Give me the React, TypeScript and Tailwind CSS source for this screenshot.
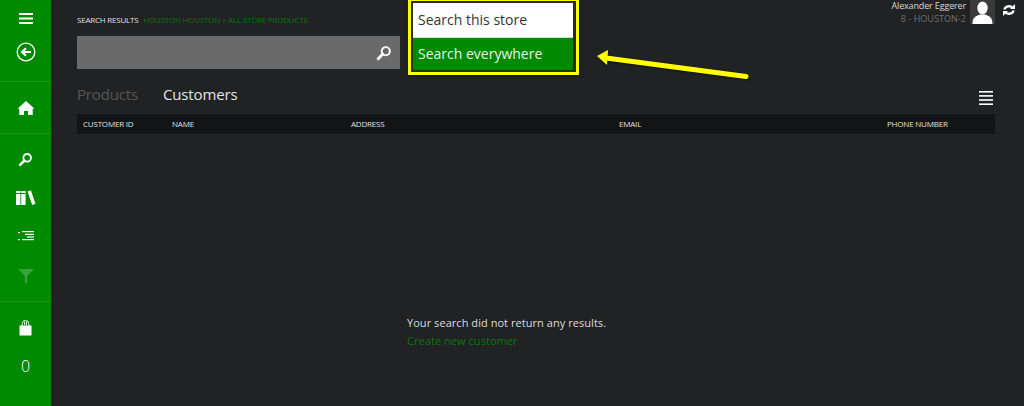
const font = { fontFamily: '"Open Sans", "Noto Sans", sans-serif' };

function Search({ size = 18 }: { size?: number }) {
  return (
    <svg width={size} height={size} viewBox="0 0 18 18" fill="none" stroke="white">
      <circle cx="11" cy="7" r="4.6" strokeWidth="2.2" />
      <path d="M7.5 10.5 L2.5 15.5" strokeWidth="3.2" strokeLinecap="round" />
    </svg>
  );
}

function Rail({ className, children }: { className: string; children: React.ReactNode }) {
  return <div className={`flex items-center justify-center ${className}`}>{children}</div>;
}

function Sidebar() {
  return (
    <div className="flex h-[406px] w-[51px] shrink-0 flex-col bg-[#008a00] text-white">
      <Rail className="h-[35px] pt-px">
        <svg width="14" height="11" viewBox="0 0 14 11" fill="white">
          <rect y="0" width="14" height="2" />
          <rect y="4.5" width="14" height="2" />
          <rect y="9" width="14" height="2" />
        </svg>
      </Rail>
      <Rail className="h-[47px] border-b border-[#1b961b] pb-[13px]">
        <svg width="20" height="20" viewBox="0 0 20 20" fill="none" stroke="white">
          <circle cx="10" cy="10" r="8.8" strokeWidth="1.3" />
          <path d="M15 10 H7 M10 6.2 L6 10 L10 13.8" strokeWidth="2.2" />
        </svg>
      </Rail>
      <Rail className="h-[52px] border-b border-[#1b961b]">
        <svg width="16" height="16" viewBox="0 0 16 16" fill="white">
          <path d="M8 1 L16 8.2 L14.7 9.3 L14.7 15 L10 15 L10 11 L6 11 L6 15 L1.3 15 L1.3 9.3 L0 8.2 Z" />
        </svg>
      </Rail>
      <Rail className="h-[49px] pt-[2px]">
        <Search size={15} />
      </Rail>
      <Rail className="h-[30px]">
        <svg width="20" height="16" viewBox="0 0 20 16" fill="white">
          <rect x="0" y="1" width="4.4" height="14" />
          <rect x="5.2" y="1" width="4.4" height="14" />
          <path d="M11.5 1.5 L14.8 0.3 L19.5 13.8 L16.2 15 Z" />
          <rect x="0" y="3" width="9.6" height="1" fill="#008a00" />
        </svg>
      </Rail>
      <Rail className="h-[46px]">
        <svg width="16" height="10" viewBox="0 0 16 10" fill="white">
          <rect x="0" y="1" width="2" height="1.2" />
          <rect x="0" y="8" width="2" height="1.2" />
          <rect x="4" y="0" width="12" height="1.2" />
          <rect x="7" y="2.8" width="9" height="1.2" />
          <rect x="9" y="5.4" width="7" height="1.2" />
          <rect x="4" y="8" width="12" height="1.2" />
        </svg>
      </Rail>
      <Rail className="h-[33px]">
        <svg width="16" height="14" viewBox="0 0 16 14" fill="#3aa23a">
          <path d="M0 0 H16 L9.2 7 V14 H6.8 V7 Z" />
        </svg>
      </Rail>
      <div className="h-[10px] border-b border-[#1b961b]" />
      <Rail className="h-[50px] pt-[1px]">
        <svg width="13" height="16" viewBox="0 0 13 16" fill="white">
          <path d="M0.5 5.5 H12.5 V15.5 H0.5 Z" />
          <path d="M3.2 6 V3.5 a3.3 3 0 0 1 6.6 0 V6 M5.5 5 V1.5 M7.5 5 V1.5" fill="none" stroke="white" strokeWidth="0.9" />
        </svg>
      </Rail>
      <Rail className="h-[28px] text-[16px] font-light">0</Rail>
    </div>
  );
}

const columns: [string, string][] = [
  ["CUSTOMER ID", "w-[89px]"],
  ["NAME", "w-[179px]"],
  ["ADDRESS", "w-[268px]"],
  ["EMAIL", "w-[268px]"],
  ["PHONE NUMBER", ""],
];

function Main() {
  return (
    <div className="relative flex h-[406px] flex-1 flex-col bg-[#212223] pl-[26px] pr-[29px]">
      <div className="absolute right-[58px] top-0 text-right text-[9px] leading-[12px]">
        <div className="tracking-[-0.15px] text-[#d8d8d8]">Alexander Eggerer</div>
        <div className="mt-[1px] tracking-[0.05px] text-[#6f6f6f]">8 - HOUSTON-2</div>
      </div>
      <div className="absolute right-[29px] top-0 flex h-[24px] w-[25px] items-end justify-center bg-[#3a3a3a]">
        <svg width="21" height="23" viewBox="0 0 21 23" fill="white">
          <ellipse cx="10.5" cy="7" rx="5.2" ry="6.5" />
          <path d="M0.5 23 C0.5 16 4 15 8 13.5 H13 C17 15 20.5 16 20.5 23 Z" />
        </svg>
      </div>
      <svg className="absolute right-[9px] top-[4px]" width="12" height="12" viewBox="0 0 12 12" fill="none" stroke="white" strokeWidth="2.4">
        <path d="M1.5 5.5 A4.5 4 0 0 1 9.5 3.8" />
        <path d="M10.5 6.5 A4.5 4 0 0 1 2.5 8.2" />
        <path d="M7 5 H12 V0 Z" fill="white" stroke="none" />
        <path d="M5 7 H0 V12 Z" fill="white" stroke="none" />
      </svg>

      <div className="mt-[14px] flex h-[11px] items-center text-[8px] leading-[11px] tracking-[-0.22px]">
        <span className="text-[#e0e0e0]">SEARCH RESULTS</span>
        <span className="ml-[5px] text-[#0c760c]">HOUSTON HOUSTON &gt; ALL STORE PRODUCTS</span>
      </div>
      <div className="mt-[11px] flex h-[33px] w-[323px] items-center justify-end bg-[#6a6a6b] pr-[8px]">
        <Search size={16} />
      </div>
      <div className="mt-[15px] flex h-[20px] items-center text-[15px] leading-[20px] tracking-[-0.15px]">
        <span className="w-[86px] text-[#555657]">Products</span>
        <span className="text-[#e4e4e4]">Customers</span>
      </div>
      <div className="flex h-[0px] justify-end pr-[2px]">
        <svg className="mt-[-13px] shrink-0" width="14" height="14" viewBox="0 0 14 14" fill="white">
          <rect y="0" width="14" height="1.6" />
          <rect y="4.1" width="14" height="1.6" />
          <rect y="8.2" width="14" height="1.6" />
          <rect y="12.4" width="14" height="1.6" />
        </svg>
      </div>
      <div className="mt-[10px] flex h-[20px] items-center bg-[#131415] pl-[6px] text-[8px] tracking-[-0.2px] text-[#e0e0e0]">
        {columns.map(([label, w]) => (
          <div key={label} className={w}>{label}</div>
        ))}
      </div>
      <div className="mt-[180px] pl-[330px] text-[11px] leading-[18px] tracking-[0.05px]">
        <div className="text-[#dcdcdc]">Your search did not return any results.</div>
        <div className="text-[#0c760c]">Create new customer</div>
      </div>

      <div className="absolute left-[357px] top-[-2px] w-[171px] border-[3px] border-[#ffff00] bg-[#2a2a2a] py-[1px] pl-[1px] pr-[2px] shadow-[1px_1px_2px_rgba(0,0,0,0.6)]">
        <div className="border border-[#2a2a2a] text-[14px]">
          <div className="flex h-[34px] items-center bg-white pb-[1px] pl-[5px] text-[#333333]">Search this store</div>
          <div className="flex h-[33px] items-center border-t border-[#cfe5cf] bg-[#008a00] pb-[1px] pl-[5px] text-[#e6f5e6]">Search everywhere</div>
        </div>
      </div>
      <svg className="absolute left-[545px] top-[48px] drop-shadow-[1px_1px_1px_rgba(0,0,0,0.6)]" width="160" height="40" viewBox="0 0 160 40" fill="none">
        <path d="M10 10 L150 28.5" stroke="#ffff00" strokeWidth="5" strokeLinecap="round" />
        <path d="M1 8 L12 2 L11 17 Z" fill="#ffff00" />
      </svg>
    </div>
  );
}

export default function App() {
  return (
    <div className="flex h-[406px] w-[1024px] overflow-hidden" style={font}>
      <Sidebar />
      <Main />
    </div>
  );
}
